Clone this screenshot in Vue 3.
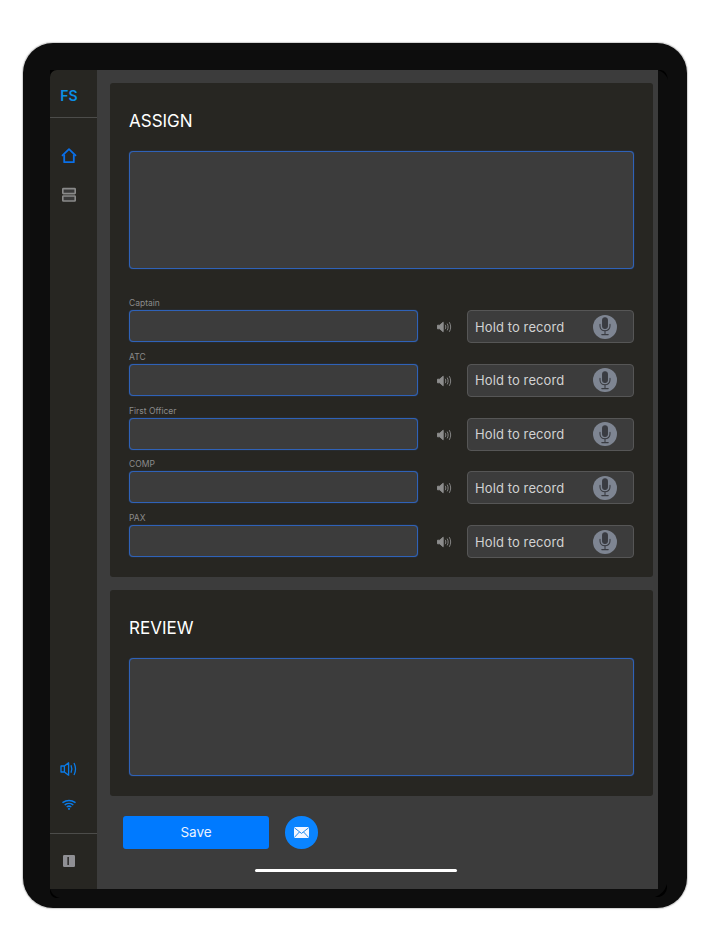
<script setup>
const roles = ['Captain', 'ATC', 'First Officer', 'COMP', 'PAX']
</script>

<template>
  <div class="page">
    <div class="device">
      <!-- black slivers where the glass shows past the app -->
      <svg class="corner corner-tr" width="10" height="10" viewBox="0 0 10 10"><path d="M0 0H3Q9 1 10 10Q8 3 0 0Z" fill="#000" /></svg>
      <svg class="corner corner-br" width="12" height="13" viewBox="0 0 12 13"><path d="M12 0V4Q11 11 4 13H0Q9 10 12 0Z" fill="#000" /></svg>
      <svg class="corner corner-bl" width="10" height="9" viewBox="0 0 10 9"><path d="M0 0V3Q1 8 6 9H10Q3 8 0 0Z" fill="#000" /></svg>
      <div class="screen">
        <aside class="sidebar">
          <div class="logo">FS</div>
          <nav class="nav">
            <svg class="nav-icon" width="18" height="18" viewBox="0 0 18 18" fill="none" stroke="#0a6fe8" stroke-width="1.8" stroke-linejoin="round">
              <path d="M2 8.8 9 2.2 16 8.8" />
              <path d="M4.2 7.4V15.2H13.8V7.4" />
            </svg>
            <svg class="nav-icon" width="18" height="18" viewBox="0 0 18 18" fill="#3a3a3a" stroke="#8a8a8a" stroke-width="1.6">
              <rect x="2.8" y="2.6" width="12.4" height="5" rx="0.6" />
              <rect x="2.8" y="10" width="12.4" height="5" rx="0.6" />
            </svg>
          </nav>
          <div class="status">
            <svg width="18" height="16" viewBox="0 0 18 16" fill="none" stroke="#0a7be8" stroke-width="1.3">
              <path d="M1 5H4.4L8.6 1.8V14.2L4.4 11H1Z" stroke-linejoin="round" />
              <path d="M4.4 5V11" />
              <path d="M11 4.2C12 6.4 12 9.6 11 11.8" />
              <path d="M14 2C15.8 5.6 15.8 10.4 14 14" />
            </svg>
            <svg width="14" height="11" viewBox="0 0 14 11" fill="none" stroke="#0a7be8" stroke-width="1.5" stroke-linecap="round">
              <path d="M1 3.4C4.4.8 9.6.8 13 3.4" />
              <path d="M3.2 5.6C5.3 4 8.7 4 10.8 5.6" />
              <path d="M5.2 7.7C6.3 7 7.7 7 8.8 7.7" />
              <circle cx="7" cy="9.8" r="0.4" fill="#0a7be8" />
            </svg>
          </div>
          <div class="sidebar-foot">
            <svg width="12" height="12" viewBox="0 0 12 12">
              <rect width="12" height="12" rx="1.2" fill="#8f8f94" />
              <rect x="4.4" y="2" width="1.5" height="8" fill="#2a2927" />
            </svg>
          </div>
        </aside>

        <main class="main">
          <section class="card assign">
            <h2 class="card-title">ASSIGN</h2>
            <div class="textarea"></div>
            <div class="roles">
              <div v-for="role in roles" :key="role" class="role">
                <label class="role-label">{{ role }}</label>
                <div class="role-row">
                  <div class="input"></div>
                  <svg class="speaker" width="16" height="12" viewBox="0 0 16 12" fill="none" stroke="#8d8d8d" stroke-width="0.9">
                    <path d="M0.5 4.2H2.6L6.2 1.2V10.8L2.6 7.8H0.5Z" fill="#8d8d8d" />
                    <path d="M8.2 3.8C9 5.1 9 6.9 8.2 8.2" />
                    <path d="M10.2 2.6C11.4 4.6 11.4 7.4 10.2 9.4" />
                    <path d="M12.3 1.2C14.1 4.1 14.1 7.9 12.3 10.8" />
                  </svg>
                  <button class="record">
                    <span>Hold to record</span>
                    <span class="mic">
                      <svg width="14" height="19" viewBox="0 0 14 19" fill="none" stroke="#3a3c42" stroke-width="1.1" stroke-linecap="round">
                        <rect x="4.6" y="0.8" width="4.8" height="10.6" rx="2.4" fill="#3a3c42" />
                        <path d="M2 7.4V9C2 11.9 4.2 13.8 7 13.8S12 11.9 12 9V7.4" />
                        <path d="M7 13.8V17.2" />
                        <path d="M3.8 17.6H10.2" />
                      </svg>
                    </span>
                  </button>
                </div>
              </div>
            </div>
          </section>

          <section class="card review">
            <h2 class="card-title">REVIEW</h2>
            <div class="textarea"></div>
          </section>

          <div class="actions">
            <button class="save">Save</button>
            <button class="send">
              <svg width="15" height="11" viewBox="0 0 15 11">
                <rect width="15" height="11" rx="1.2" fill="#f2f6ff" />
                <path d="M0.4 0.8 7.5 6.4 14.6 0.8M0.4 10.4 5.4 5M14.6 10.4 9.6 5" fill="none" stroke="#0a7fee" stroke-width="0.9" />
              </svg>
            </button>
          </div>
        </main>
        <div class="home-bar"></div>
      </div>
    </div>
  </div>
</template>

<style>
html, body {
  margin: 0;
  background: #fff;
}
</style>

<style scoped>
.page {
  width: 712px;
  height: 950px;
  padding: 43px 25px 42px 23px;
  box-sizing: border-box;
  font-family: Inter, "Liberation Sans", sans-serif;
}

.device {
  position: relative;
  height: 865px;
  box-sizing: border-box;
  padding: 27px 29px 19px 27px;
  background: #0d0d0d;
  border-radius: 30px;
  box-shadow: 0 0 0 1px #d4d4d4, 0 0 2px 1px #e6e6e6;
}

.corner {
  position: absolute;
}

.corner-tr {
  left: 635px;
  top: 27px;
}

.corner-br {
  left: 632px;
  top: 841px;
}

.corner-bl {
  left: 27px;
  top: 846px;
}

.screen {
  position: relative;
  isolation: isolate;
  display: flex;
  height: 100%;
  background: #3c3c3c;
  overflow: hidden;
}

.screen::before {
  content: "";
  position: absolute;
  left: 0;
  top: 0;
  width: 7px;
  height: 7px;
  background: #000;
  z-index: -1;
}

.sidebar {
  width: 47px;
  flex-shrink: 0;
  display: flex;
  flex-direction: column;
  background: #272622;
  border-top-left-radius: 7px;
}

.logo {
  height: 43px;
  display: flex;
  align-items: center;
  justify-content: center;
  border-bottom: 1px solid #4c4c4a;
  color: #0a8fe8;
  font-size: 14px;
  font-weight: 600;
  padding: 4px 9px 0 0;
}

.nav {
  display: flex;
  flex-direction: column;
  align-items: center;
  gap: 21px;
  padding: 29px 9px 0 0;
}

.status {
  margin-top: auto;
  display: flex;
  flex-direction: column;
  align-items: center;
  gap: 21.5px;
  padding: 0 9px 23.5px 0;
}

.sidebar-foot {
  height: 56px;
  display: flex;
  align-items: center;
  justify-content: center;
  border-top: 1px solid #4c4c4a;
  box-sizing: border-box;
  padding: 0 9px 1px 0;
}

.main {
  flex: 1;
  display: flex;
  flex-direction: column;
  gap: 13px;
  padding: 13px 5px 0 13px;
}

.card {
  background: #272622;
  border-radius: 3px;
  padding: 0 19px;
}

.assign {
  height: 494px;
}

.review {
  height: 206px;
}

.card-title {
  margin: 0;
  height: 68px;
  display: flex;
  align-items: center;
  color: #fff;
  font-size: 17px;
  font-weight: 400;
  padding-top: 7px;
  box-sizing: border-box;
}

.textarea {
  height: 118px;
  box-sizing: border-box;
  background: #3c3c3c;
  border: 1px solid #2f62b8;
  border-radius: 4px;
  box-shadow: 0 0 1px #2f62b8;
}

.roles {
  margin-top: 28px;
}

.role {
  height: 53.75px;
}

.role-label {
  display: block;
  height: 13px;
  line-height: 13px;
  font-size: 8.5px;
  color: #8b8b8b;
}

.role-row {
  display: flex;
  align-items: flex-start;
}

.input {
  width: 289px;
  height: 32px;
  box-sizing: border-box;
  background: #3c3c3c;
  border: 1px solid #2f62b8;
  border-radius: 4px;
  box-shadow: 0 0 1px #2f62b8;
}

.speaker {
  margin: 11px 14px 0 19px;
}

.record {
  width: 167px;
  height: 33px;
  box-sizing: border-box;
  display: flex;
  align-items: center;
  justify-content: space-between;
  padding: 0 16.5px 0 7px;
  background: #3c3c3c;
  border: 1px solid #565656;
  border-radius: 4px;
  color: #d2d2d2;
  font-family: inherit;
  font-size: 13px;
  letter-spacing: 0.1px;
}

.mic {
  width: 24px;
  height: 24px;
  border-radius: 50%;
  background: #7e8592;
  display: flex;
  align-items: center;
  justify-content: center;
}

.actions {
  display: flex;
  align-items: center;
  gap: 16px;
  padding: 7px 0 0 13px;
}

.save {
  width: 146px;
  height: 32.5px;
  background: #007aff;
  border: none;
  border-radius: 3px;
  color: #eaf2ff;
  font-family: inherit;
  font-size: 13.5px;
}

.send {
  width: 32.5px;
  height: 32.5px;
  padding: 0;
  border: none;
  border-radius: 50%;
  background: #0a84ff;
  display: flex;
  align-items: center;
  justify-content: center;
}

.home-bar {
  position: absolute;
  left: 205px;
  bottom: 17px;
  width: 202px;
  height: 3px;
  border-radius: 2px;
  background: #fff;
}
</style>
